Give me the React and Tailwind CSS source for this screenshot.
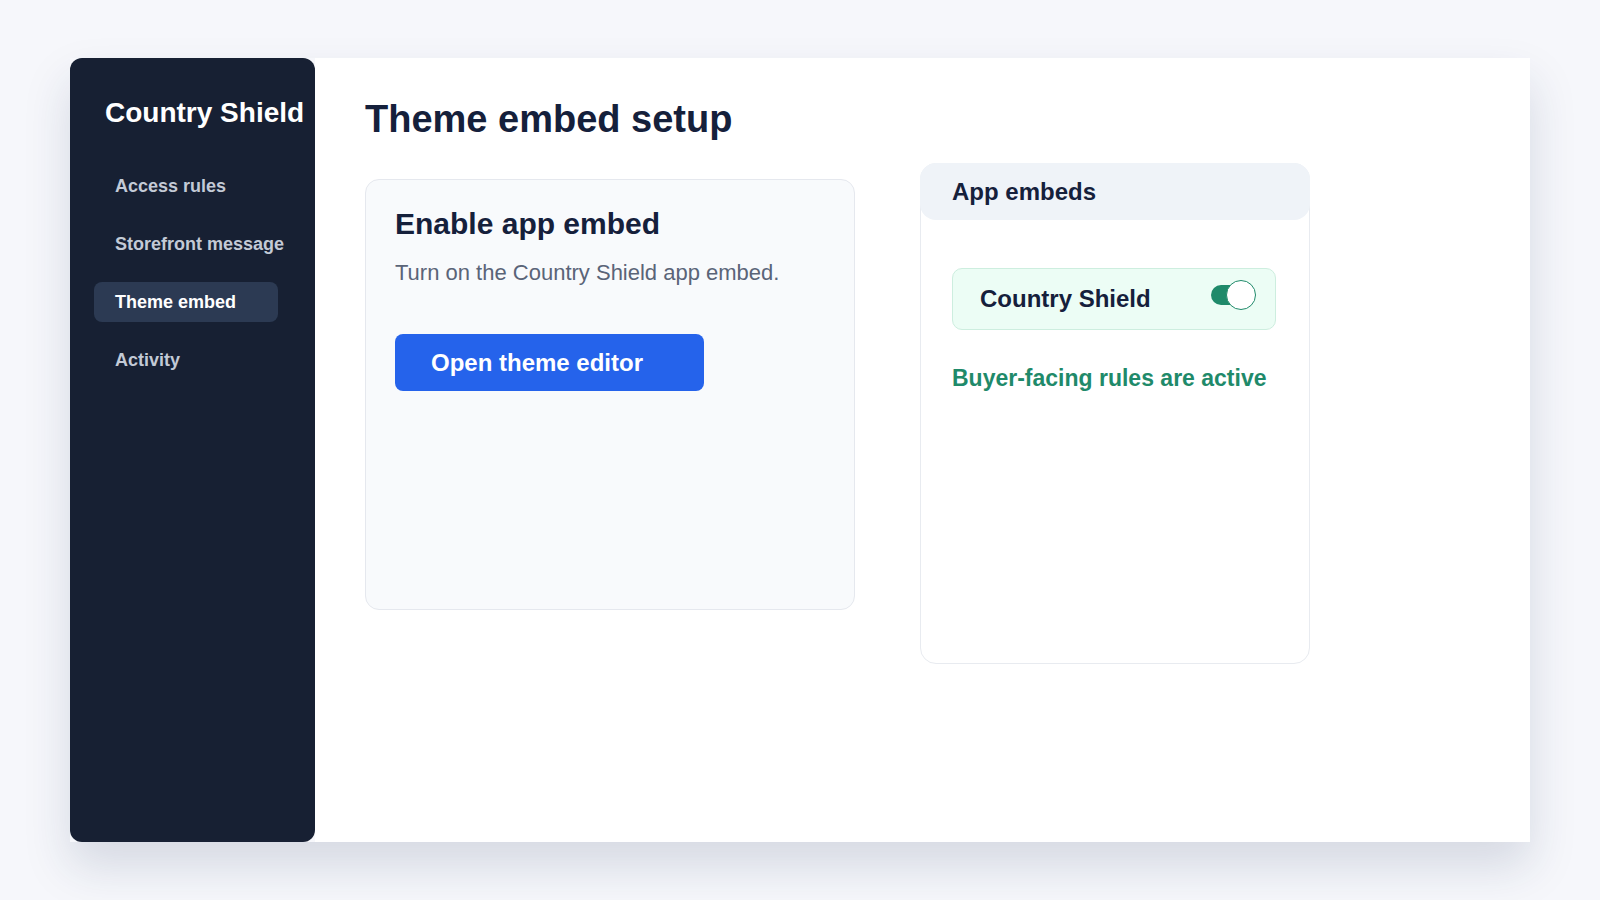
import React from 'react';

const navItems = ['Access rules', 'Storefront message', 'Theme embed', 'Activity'];

const App = () => {
  return (
    <div
      className="h-screen w-full bg-[#f6f7fb] px-[70px] py-[58px]"
      style={{ fontFamily: '"Liberation Sans", Arial, sans-serif' }}
    >
      <div className="flex h-full shadow-[0_24px_44px_rgba(30,50,90,0.15)]">
        {/* Sidebar */}
        <aside className="w-[245px] shrink-0 rounded-xl bg-[#172033] pt-[38px]">
          <h1 className="pl-[35px] text-[28px] font-bold leading-[34px] text-white whitespace-nowrap">
            Country Shield
          </h1>
          <nav className="mt-[36px] flex flex-col gap-[18px] pl-[24px]">
            {navItems.map((item) => (
              <div
                key={item}
                className={
                  item === 'Theme embed'
                    ? 'flex h-10 w-[184px] items-center rounded-lg bg-[#2c3a53] pl-[21px] text-[18px] font-bold text-white'
                    : 'flex h-10 w-[184px] items-center rounded-lg pl-[21px] text-[18px] font-bold text-[#c3cad6] whitespace-nowrap'
                }
              >
                {item}
              </div>
            ))}
          </nav>
        </aside>

        {/* Main */}
        <main className="flex flex-1 gap-[65px] bg-white pl-[50px] pt-[38px]">
          <div className="w-[490px] shrink-0">
            <h2 className="text-[38px] font-bold leading-[46px] text-[#15203b]">Theme embed setup</h2>

            <div className="mt-[37px] h-[431px] rounded-[14px] border border-[#e5e8ee] bg-[#f8fafc] px-[29px] pt-[26px]">
              <h3 className="text-[30px] font-bold leading-[36px] text-[#15203b]">Enable app embed</h3>
              <p className="mt-[17px] text-[22px] leading-[28px] text-[#5a6478]">
                Turn on the Country Shield app embed.
              </p>
              <button
                type="button"
                className="mt-[47px] flex h-[57px] w-[309px] items-center rounded-lg bg-[#2563eb] pl-[36px] text-[24px] font-bold text-white"
              >
                Open theme editor
              </button>
            </div>
          </div>

          <div className="mt-[67px] h-[501px] w-[390px] shrink-0 rounded-2xl border border-[#e8ebf0] bg-white">
            <div className="-mx-px -mt-px flex h-[57px] items-center rounded-2xl bg-[#eff3f8] pl-[32px] text-[24px] font-bold text-[#15203b]">
              App embeds
            </div>
            <div className="px-[31px] pt-[48px]">
              <div className="flex h-[62px] w-[324px] items-center justify-between rounded-[10px] border border-[#cdeedf] bg-[#ecfdf5] pl-[27px] pr-[19px]">
                <span className="text-[24px] font-bold text-[#15203b]">Country Shield</span>
                <div className="relative mb-[8px] h-[30px] w-[45px]">
                  <div className="absolute left-0 top-[5px] h-5 w-[40px] rounded-full bg-[#1f8a6a]" />
                  <div className="absolute right-0 top-0 h-[30px] w-[30px] rounded-full border border-[#1f8a6a] bg-white" />
                </div>
              </div>
              <p className="mt-[34px] text-[23px] font-bold leading-[28px] text-[#1f8a6a] whitespace-nowrap">
                Buyer-facing rules are active
              </p>
            </div>
          </div>
        </main>
      </div>
    </div>
  );
};

export default App;
